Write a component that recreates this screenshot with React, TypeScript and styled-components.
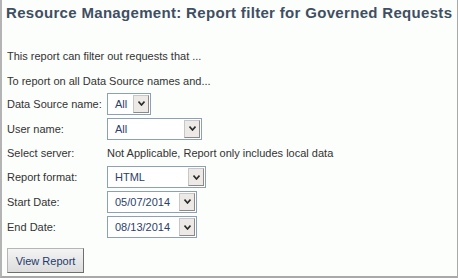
import React from "react";
import styled, { createGlobalStyle } from "styled-components";

const Global = createGlobalStyle`
  html, body { margin: 0; padding: 0; background: #ffffff; }
  body { font-family: "Liberation Sans", Arial, sans-serif; }
`;

const Frame = styled.div`
  box-sizing: border-box;
  width: 458px;
  height: 278px;
  border: 1px solid #a9a9a9;
  border-top: none;
  border-bottom: 2px solid #a9a9a9;
  border-left: 2px solid #b4b4b4;
  background: #fcfefc;
  display: flex;
  flex-direction: column;
  padding: 4px 0 0 3px;
`;

const Title = styled.h1`
  margin: 0;
  font-family: "Liberation Sans", Arial, sans-serif;
  font-weight: bold;
  font-size: 15px;
  letter-spacing: 0.32px;
  line-height: 18px;
  color: #3f4f63;
  padding-left: 1px;
`;

const Body = styled.div`
  display: flex;
  flex-direction: column;
  padding-top: 28px;
  padding-left: 2px;
`;

const Para = styled.div<{ $mb: number }>`
  font-size: 11px;
  line-height: 13px;
  color: #333333;
  margin-bottom: ${(p) => p.$mb}px;
`;

const Row = styled.div<{ $h: number }>`
  display: grid;
  grid-template-columns: 100px auto;
  align-items: center;
  height: ${(p) => p.$h}px;
  font-size: 11px;
  color: #333333;
`;

const Label = styled.span``;

const SelectBox = styled.div<{ $w: number }>`
  box-sizing: border-box;
  width: ${(p) => p.$w}px;
  height: 22px;
  border: 1px solid #8ea0b8;
  background: #ffffff;
  display: flex;
  align-items: center;
  justify-content: space-between;
  padding: 1px;
`;

const Value = styled.span`
  padding-left: 6px;
  font-size: 11px;
  color: #2b3f6b;
`;

const Arrow = styled.span`
  box-sizing: border-box;
  width: 16px;
  height: 18px;
  background: #ece9e6;
  border: 1px solid #c7c7c7;
  border-right-color: #8a8a8a;
  border-bottom-color: #8a8a8a;
  display: flex;
  align-items: center;
  justify-content: center;
`;

const Chevron = () => (
  <svg width="7" height="5" viewBox="0 0 7 5">
    <path d="M0.5 0.5 L3.5 4 L6.5 0.5" fill="none" stroke="#2a2a2a" strokeWidth="1.6" />
  </svg>
);

const Button = styled.button`
  box-sizing: border-box;
  width: 77px;
  height: 25px;
  margin-top: 8px;
  font-family: "Liberation Sans", Arial, sans-serif;
  font-size: 11px;
  color: #213a6b;
  background: linear-gradient(#f4f4f4, #dcdcdc);
  border: 1px solid #b5b5b5;
  border-right-color: #6e6e6e;
  border-bottom-color: #6e6e6e;
  padding: 0;
`;

function Select({ w, value }: { w: number; value: string }) {
  return (
    <SelectBox $w={w}>
      <Value>{value}</Value>
      <Arrow>
        <Chevron />
      </Arrow>
    </SelectBox>
  );
}

export default function App() {
  return (
    <>
      <Global />
      <Frame>
        <Title>Resource Management: Report filter for Governed Requests</Title>
        <Body>
          <Para $mb={12}>This report can filter out requests that ...</Para>
          <Para $mb={3}>To report on all Data Source names and...</Para>
          <Row $h={25}>
            <Label>Data Source name:</Label>
            <Select w={44} value="All" />
          </Row>
          <Row $h={25}>
            <Label>User name:</Label>
            <Select w={95} value="All" />
          </Row>
          <Row $h={24}>
            <Label>Select server:</Label>
            <Label>Not Applicable, Report only includes local data</Label>
          </Row>
          <Row $h={24}>
            <Label>Report format:</Label>
            <Select w={99} value="HTML" />
          </Row>
          <Row $h={25}>
            <Label>Start Date:</Label>
            <Select w={90} value="05/07/2014" />
          </Row>
          <Row $h={26}>
            <Label>End Date:</Label>
            <Select w={90} value="08/13/2014" />
          </Row>
          <Button>View Report</Button>
        </Body>
      </Frame>
    </>
  );
}
